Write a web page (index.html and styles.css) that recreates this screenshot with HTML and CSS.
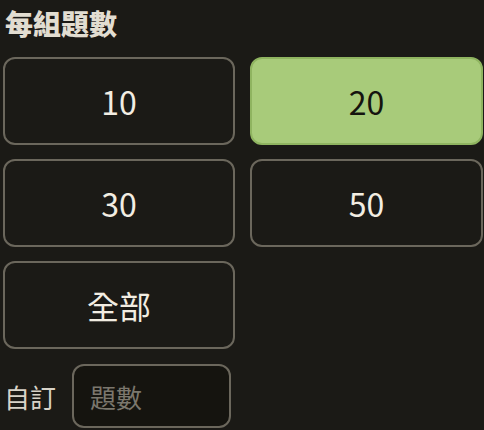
FILE: index.html
```html
<!DOCTYPE html>
<html lang="zh-Hant">
<head>
<meta charset="utf-8">
<link rel="stylesheet" href="styles.css">
</head>
<body>
<div class="panel">
  <div class="title">每組題數</div>
  <div class="grid">
    <button class="opt">10</button>
    <button class="opt active">20</button>
    <button class="opt">30</button>
    <button class="opt">50</button>
    <button class="opt">全部</button>
  </div>
  <div class="custom">
    <span class="label">自訂</span>
    <input class="field" type="text" placeholder="題數">
  </div>
</div>
</body>
</html>
```
FILE: styles.css
```css
html, body {
  margin: 0;
  padding: 0;
  background: #1b1a16;
}
.panel {
  padding: 0 0 0 3px;
  font-family: "Noto Sans CJK TC", "Noto Sans", sans-serif;
  color: #f2ede2;
}
.title {
  font-size: 28px;
  font-weight: 900;
  color: #e2ddd1;
  line-height: 34px;
  padding: 6px 0 0 2px;
  height: 57px;
  box-sizing: border-box;
}
.grid {
  display: grid;
  grid-template-columns: 232px 233px;
  grid-auto-rows: 88px;
  column-gap: 15px;
  row-gap: 14px;
  width: 480px;
}
.opt {
  box-sizing: border-box;
  margin: 0;
  padding: 0;
  border: 2px solid #6b675c;
  border-radius: 12px;
  background: #1b1a16;
  color: #f2ede2;
  font-family: "Noto Sans CJK TC", "Noto Sans", sans-serif;
  font-size: 32px;
  line-height: 1;
}
.opt.active {
  background: #a8cb7a;
  border-color: #8fb460;
  color: #15140f;
}
.custom {
  display: flex;
  align-items: center;
  margin-top: 15px;
  gap: 16px;
}
.label {
  font-size: 26px;
  color: #d8d3c8;
  padding-left: 1px;
}
.field {
  box-sizing: border-box;
  width: 159px;
  height: 64px;
  border: 2px solid #6b675c;
  border-radius: 12px;
  background: #15140f;
  color: #f2ede2;
  font-family: "Noto Sans CJK TC", "Noto Sans", sans-serif;
  font-size: 26px;
  padding: 0 0 0 16px;
  outline: none;
}
.field::placeholder {
  color: #7b776d;
}
```
